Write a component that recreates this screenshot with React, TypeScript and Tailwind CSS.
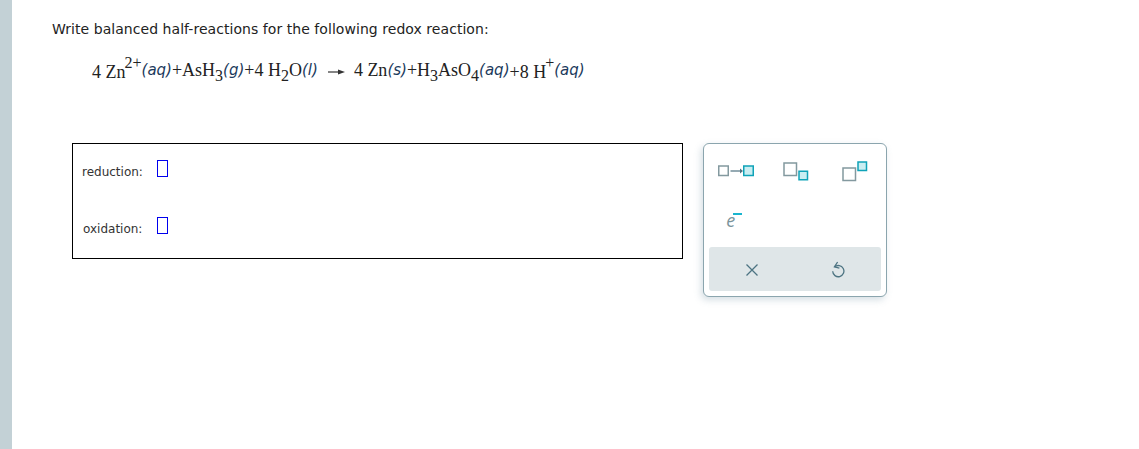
const serif = "font-['Liberation_Serif',serif] text-[18px] text-[#222]"
const state = "font-['DejaVu_Sans',sans-serif] italic text-[15px] text-[#1b3a5c]"

const Sup = ({ children }: { children: string }) => (
  <span className="inline-block align-[10px] text-[16px] leading-none -ml-px">{children}</span>
)
const Sub = ({ children }: { children: string }) => (
  <span className="inline-block align-[-5px] text-[16px] leading-none">{children}</span>
)

const Blank = () => <span className="block w-[11px] h-[17px] mb-[7px] border border-[#0000ee]" />

const Sq = ({ x, y, s, on }: { x: number; y: number; s: number; on?: boolean }) => (
  <rect
    x={x}
    y={y}
    width={s}
    height={s}
    fill={on ? '#c9eef2' : '#fff'}
    stroke={on ? '#0fa3b8' : '#83999f'}
    strokeWidth="1.5"
  />
)

const ArrowIcon = () => (
  <svg width="36" height="12" viewBox="0 0 36 12">
    <Sq x={0.75} y={1} s={9.5} />
    <path d="M12.5 6h10" stroke="#4f7280" strokeWidth="1.2" />
    <path d="M22 3.5l3 2.5-3 2.5z" fill="#4f7280" />
    <Sq x={25.75} y={1} s={9.5} on />
  </svg>
)

const SubIcon = () => (
  <svg width="26" height="19" viewBox="0 0 26 19">
    <Sq x={1} y={1} s={12.5} />
    <Sq x={16} y={9.25} s={8.5} on />
  </svg>
)

const SupIcon = () => (
  <svg width="26" height="21" viewBox="0 0 26 21">
    <Sq x={1} y={7} s={12.5} />
    <Sq x={16} y={1} s={8.5} on />
  </svg>
)

const App = () => {
  return (
    <div className="flex w-full h-[449px] bg-white overflow-hidden font-['DejaVu_Sans',sans-serif]">
      <div className="w-3 h-full bg-[#c3d1d6]" />

      <div className="flex-1 pl-10 pt-[19px]">
        <p className="text-[14px] leading-[20px] text-[#222] tracking-[0.05px]">
          Write balanced half-reactions for the following redox reaction:
        </p>

        <div className="mt-[15px] ml-10 h-[32px] flex items-center whitespace-nowrap">
          <span className={serif}>
            4 Zn<Sup>2+</Sup>
          </span>
          <span className={state}>(aq)</span>
          <span className={serif}>
            +AsH<Sub>3</Sub>
          </span>
          <span className={state}>(g)</span>
          <span className={serif}>
            +4 H<Sub>2</Sub>O
          </span>
          <span className={state}>(l)</span>
          <svg className="ml-[10px] mr-[9px] mt-[3px]" width="17" height="8" viewBox="0 0 17 8">
            <path d="M0 4h12" stroke="#333" strokeWidth="1.2" />
            <path d="M10 1.5l7 2.5-7 2.5z" fill="#333" />
          </svg>
          <span className={serif}>4 Zn</span>
          <span className={state}>(s)</span>
          <span className={serif}>
            +H<Sub>3</Sub>AsO<Sub>4</Sub>
          </span>
          <span className={state}>(aq)</span>
          <span className={serif}>
            +8 H<Sup>+</Sup>
          </span>
          <span className={state}>(aq)</span>
        </div>

        <div className="mt-[57px] ml-5 flex items-start">
          <div className="w-[611px] h-[116px] border border-black flex flex-col pl-[9px] text-[12px] text-[#333]">
            <div className="mt-[18px] h-[20px] flex items-center gap-[14px]">
              <span>reduction:</span>
              <Blank />
            </div>
            <div className="mt-[37px] h-[20px] flex items-center gap-[15px] pl-px">
              <span>oxidation:</span>
              <Blank />
            </div>
          </div>

          <div className="ml-[20px] w-[184px] h-[154px] rounded-[6px] border border-[#8ba5ae] bg-white shadow-[-2px_3px_7px_rgba(120,150,165,0.3)] px-[5px] pb-[5px] flex flex-col">
            <div className="h-[103px] grid grid-cols-3 grid-rows-2">
              <div className="flex items-center justify-center pr-[4px] pt-[3px]">
                <ArrowIcon />
              </div>
              <div className="flex items-center justify-center pl-[2px] pt-[3px]">
                <SubIcon />
              </div>
              <div className="flex items-center justify-center pl-[6px] pt-[3px]">
                <SupIcon />
              </div>
              <div className="flex items-center justify-center pr-[14px] pb-[2px]">
                <span className="relative text-[18px] leading-none text-[#7b949c] font-['Open_Sans',sans-serif] italic">
                  e
                  <span className="absolute -right-[7px] top-[2px] w-[9px] h-[2px] bg-[#19b5cf]" />
                </span>
              </div>
            </div>
            <div className="flex-1 rounded-[3px] bg-[#dfe6e8] grid grid-cols-2">
              <div className="flex items-center justify-center pt-[1px]">
                <svg width="14" height="14" viewBox="0 0 14 14">
                  <path d="M1.5 1.5l11 11M12.5 1.5l-11 11" stroke="#4d7482" strokeWidth="1.3" fill="none" />
                </svg>
              </div>
              <div className="flex items-center justify-center">
                <svg width="14" height="17" viewBox="0 0 14 17">
                  <path
                    d="M3.2 5.6A5.6 5.6 0 1 1 1.3 10"
                    stroke="#4d7482"
                    strokeWidth="1.3"
                    fill="none"
                    transform="translate(0.4 0.3)"
                  />
                  <path d="M6.6 1L3.4 5.8l5 1.4" stroke="#4d7482" strokeWidth="1.3" fill="none" />
                </svg>
              </div>
            </div>
          </div>
        </div>
      </div>
    </div>
  )
}

export default App
